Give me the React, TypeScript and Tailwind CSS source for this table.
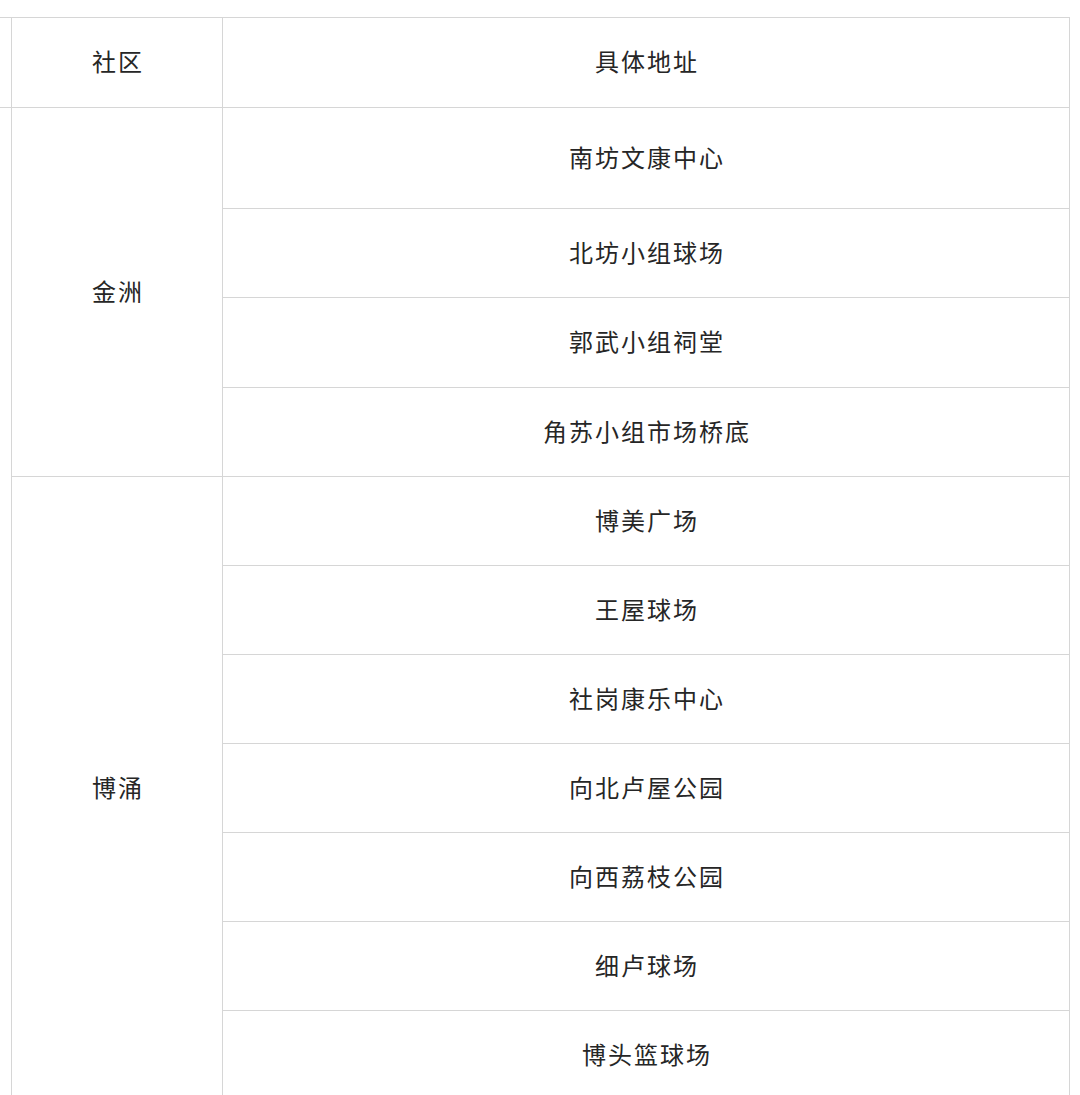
const jinzhou = ["南坊文康中心", "北坊小组球场", "郭武小组祠堂", "角苏小组市场桥底"]
const boyong = ["博美广场", "王屋球场", "社岗康乐中心", "向北卢屋公园", "向西荔枝公园", "细卢球场", "博头篮球场"]

function Cell({ children, className = "" }: { children?: React.ReactNode; className?: string }) {
  return (
    <div className={`flex items-center justify-center bg-white pb-[3px] pl-[2px] tracking-[2px] ${className}`}>
      {children}
    </div>
  )
}

export default function App() {
  return (
    <div className="min-h-[1095px] overflow-hidden bg-white pt-[17px]">
      <div
        className="grid w-[1070px] grid-cols-[11px_210px_846px] grid-rows-[89px_100px_88px_89px_repeat(8,88px)] gap-px border-t border-r border-b border-[#d6d6d6] bg-[#d6d6d6] text-[24px] leading-none text-[#262626] [font-family:'Noto_Sans_CJK_SC','Noto_Sans',sans-serif]"
      >
        <Cell />
        <Cell>社区</Cell>
        <Cell>具体地址</Cell>

        <Cell className="row-span-11" />
        <Cell className="row-span-4">金洲</Cell>
        {jinzhou.map((s) => (
          <Cell key={s}>{s}</Cell>
        ))}

        <Cell className="row-span-7">博涌</Cell>
        {boyong.map((s) => (
          <Cell key={s}>{s}</Cell>
        ))}
      </div>
    </div>
  )
}
